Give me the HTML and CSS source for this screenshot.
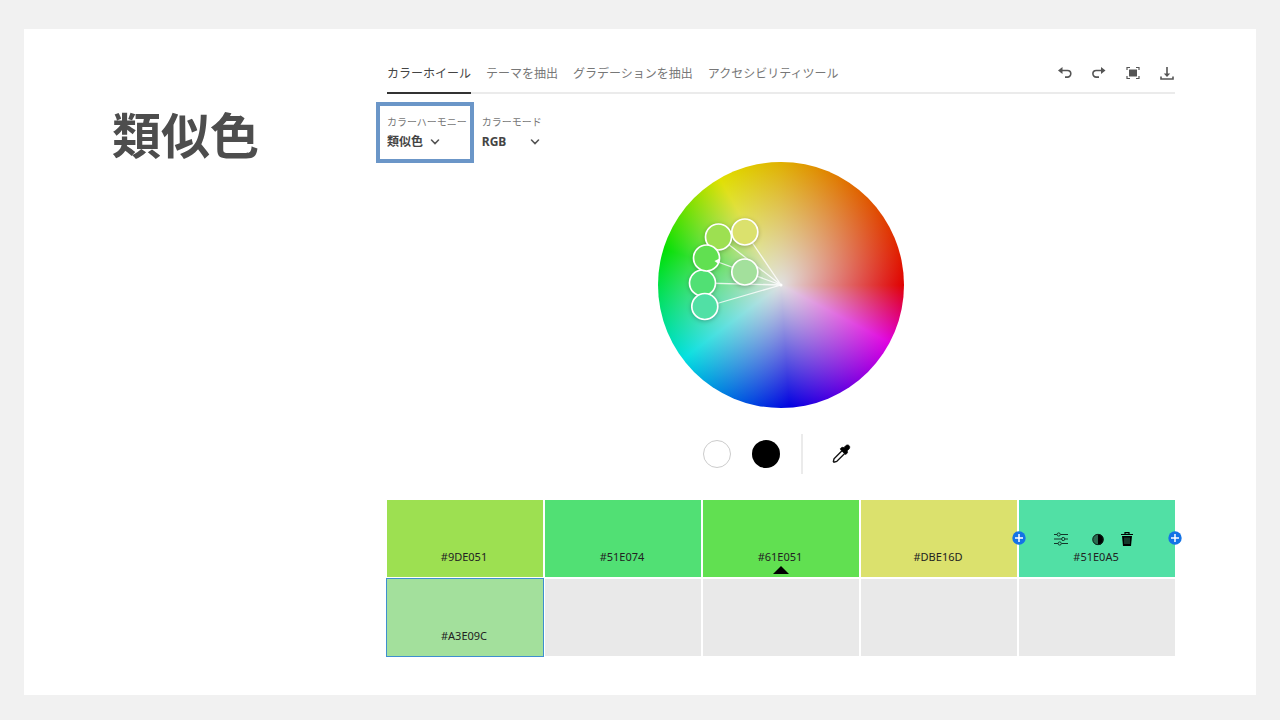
FILE: index.html
```html
<!DOCTYPE html>
<html lang="ja">
<head>
<meta charset="utf-8">
<title>類似色</title>
<meta name="viewport" content="width=device-width, initial-scale=1">
<link rel="stylesheet" href="styles.css">
</head>
<body>
<main class="slide">
  <h1 class="title">類似色</h1>
  <section class="tool">
    <header class="topbar">
      <nav class="tabs">
        <a class="tab tab-active" href="#wheel">カラーホイール</a>
        <a class="tab" href="#theme">テーマを抽出</a>
        <a class="tab" href="#gradient">グラデーションを抽出</a>
        <a class="tab" href="#a11y">アクセシビリティツール</a>
      </nav>
      <div class="actions">
        <button class="icon-btn" aria-label="元に戻す"><svg width="16" height="16" viewBox="0 0 16 16"><path d="M5 5.500h5.500a3.300 3.300 0 0 1 0 6.600H8" fill="none" stroke="#555" stroke-width="1.600"/><path d="M1 5.500 5.500 2v7z" fill="#555"/></svg></button>
        <button class="icon-btn" aria-label="やり直し"><svg width="16" height="16" viewBox="0 0 16 16"><path d="M10 5.500H5.200a3.300 3.300 0 0 0 0 6.600H8" fill="none" stroke="#555" stroke-width="1.600"/><path d="M14.500 5.500 10 2v7z" fill="#555"/></svg></button>
        <button class="icon-btn" aria-label="全画面"><svg width="16" height="16" viewBox="0 0 16 16"><path d="M4 4.500h8v7H4z" fill="#555"/><path d="M2 5V2.500h3M11 2.500h3V5M14 11v2.500h-3M5 13.500H2V11" fill="none" stroke="#555" stroke-width="1.200"/></svg></button>
        <button class="icon-btn" aria-label="ダウンロード"><svg width="16" height="16" viewBox="0 0 16 16"><path d="M8 2v8M2 11.500V14h12v-2.500" fill="none" stroke="#555" stroke-width="1.600"/><path d="M4.800 8.500h6.400L8 12z" fill="#555"/></svg></button>
      </div>
    </header>

    <div class="options">
      <div class="field field-marked">
        <label for="harmony">カラーハーモニー</label>
        <div class="picker"><select id="harmony" class="select-short"><option>類似色</option></select><svg class="chevron" width="10" height="8" viewBox="0 0 10 8"><path d="m1.500 2 3.500 3.500L8.500 2" fill="none" stroke="#555" stroke-width="1.600" stroke-linecap="round"/></svg></div>
      </div>
      <div class="field">
        <label for="mode">カラーモード</label>
        <div class="picker"><select id="mode" class="select-long"><option>RGB</option></select><svg class="chevron" width="10" height="8" viewBox="0 0 10 8"><path d="m1.500 2 3.500 3.500L8.500 2" fill="none" stroke="#555" stroke-width="1.600" stroke-linecap="round"/></svg></div>
      </div>
    </div>

    <div class="wheel">
      <svg class="markers" viewBox="0 0 246 246">
        <g stroke="#fff" stroke-width="1.300" opacity=".8">
          <path d="M123 123 87 70M123 123 61 75M123 123 49 96M123 123 87 110M123 123 45 121M123 123 47 145"/>
        </g>
        <circle cx="123" cy="123" r="1.500" fill="#fff"/>
        <g class="dots" stroke="#fff" stroke-width="1.700">
          <circle cx="60.500" cy="75" r="13" fill="#9de051"/>
          <circle cx="86.800" cy="70" r="13" fill="#dbe16d"/>
          <circle cx="86.800" cy="110" r="13" fill="#a3e09c"/>
          <circle cx="44.500" cy="121" r="13" fill="#51e074"/>
          <circle cx="48.500" cy="96" r="13" fill="#61e051"/>
          <circle cx="46.800" cy="144.500" r="13" fill="#51e0a5"/>
        </g>
        <path d="m56.500 99 5-2.500-1 5.500z" fill="#fff"/>
      </svg>
    </div>

    <div class="background-row">
      <button class="dot dot-white" aria-label="白の背景"></button>
      <button class="dot dot-black" aria-label="黒の背景"></button>
      <span class="divider"></span>
      <button class="dropper" aria-label="スポイト"><svg width="20" height="20" viewBox="0 0 20 20"><path d="m11 6.800-8 8-.6 2.700.6.600 2.700-.7 8-8" fill="#fff" stroke="#111" stroke-width="1.400"/><path d="m9.300 4.800 1.800-1.500 1.900.4c.9-1.400 2-2.500 3.300-2.700 1.500-.1 2.500 1 2.400 2.400-.1 1.300-1.300 2.400-2.600 3.300l.4 1.900-1.500 1.800-1.600-.9-3.200-3.200z" fill="#000" stroke="#000" stroke-width=".8"/></svg></button>
    </div>

    <div class="swatches">
      <div class="swatch c1"><span>#9DE051</span></div>
      <div class="swatch c2"><span>#51E074</span></div>
      <div class="swatch c3"><span>#61E051</span><i class="base-mark"></i></div>
      <div class="swatch c4"><span>#DBE16D</span></div>
      <div class="swatch c5">
        <button class="add add-left" aria-label="左に追加"><svg width="14" height="14" viewBox="0 0 14 14"><circle cx="7" cy="7" r="6.700" fill="#1473e6"/><path d="M7 3v8M3 7h8" stroke="#fff" stroke-width="1.500"/></svg></button>
        <div class="swatch-tools">
          <button class="icon-btn" aria-label="調整"><svg width="14" height="14" viewBox="0 0 14 14"><g fill="none" stroke="#14352a" stroke-width="1"><path d="M0 2.500h3M6.500 2.500H14M0 7h7.500M11 7h3M0 11.500h4M7.500 11.500H14"/><circle cx="4.700" cy="2.500" r="1.600"/><circle cx="9.200" cy="7" r="1.600"/><circle cx="5.700" cy="11.500" r="1.600"/></g></svg></button>
          <button class="icon-btn shade" aria-label="シェード"><svg width="14" height="14" viewBox="0 0 14 14"><circle cx="7" cy="7.500" r="5.500" fill="#2a6b50"/><path d="M7 2a5.500 5.500 0 0 1 0 11z" fill="#000"/><circle cx="7" cy="7.500" r="5.200" fill="none" stroke="#0c271c"/></svg></button>
          <button class="icon-btn" aria-label="削除"><svg width="14" height="14" viewBox="0 0 14 14"><path d="M1 2.500h12M5 2V.700h4V2" fill="none" stroke="#000" stroke-width="1.200"/><path d="M2 4h10l-1 10H3z" fill="#000"/><path d="M5 5.500v6.500M7 5.500v6.500M9 5.500v6.500" stroke="#348e69" stroke-width=".8"/></svg></button>
        </div>
        <span>#51E0A5</span>
        <button class="add add-right" aria-label="右に追加"><svg width="14" height="14" viewBox="0 0 14 14"><circle cx="7" cy="7" r="6.700" fill="#1473e6"/><path d="M7 3v8M3 7h8" stroke="#fff" stroke-width="1.500"/></svg></button>
      </div>
      <div class="swatch c6"><span>#A3E09C</span></div>
      <div class="swatch"></div>
      <div class="swatch"></div>
      <div class="swatch"></div>
      <div class="swatch"></div>
    </div>
  </section>
</main>
</body>
</html>
```
FILE: styles.css
```css
* { box-sizing: border-box; }

body {
  margin: 0;
  min-height: 100vh;
  padding: 29px 24px 25px;
  display: flex;
  background: #f1f1f1;
  color: #444;
  font-family: "Noto Sans", "Noto Sans CJK JP", sans-serif;
}

button {
  padding: 0;
  border: 0;
  background: none;
  cursor: pointer;
}

svg { display: block; }

.slide {
  flex: 1;
  display: grid;
  grid-template-columns: 274px minmax(0, 1fr);
  column-gap: 1px;
  padding: 25px 81px 38px 88px;
  background: #fff;
}

.title {
  margin: 43px 0 0;
  color: #4d4d4d;
  font-family: "Noto Sans CJK JP", sans-serif;
  font-size: 49px;
  line-height: 72px;
  font-weight: 700;
}

.tool {
  display: flex;
  flex-direction: column;
}

.topbar {
  display: flex;
  justify-content: space-between;
  height: 40px;
  border-bottom: 2px solid #ebebeb;
}

.tabs {
  display: flex;
  gap: 15px;
}

.tab {
  height: 40px;
  border-bottom: 2px solid transparent;
  color: #777;
  font-size: 12px;
  line-height: 40px;
  text-decoration: none;
  white-space: nowrap;
}

.tab-active {
  border-color: #333;
  color: #444;
}

.actions {
  display: flex;
  align-items: center;
  gap: 18px;
}

.options {
  display: flex;
  gap: 15px;
  padding-top: 20px;
}

.field {
  position: relative;
  display: flex;
  flex-direction: column;
}

.field label {
  color: #777;
  font-size: 10px;
  line-height: 16px;
}

/* Frame drawn round the harmony field */
.field-marked::after {
  content: "";
  position: absolute;
  inset: -12px -7px -9px -11px;
  border: 4px solid #6b96c8;
  pointer-events: none;
}

.picker {
  display: flex;
  align-items: center;
  height: 24px;
}

.picker select {
  appearance: none;
  padding: 0;
  border: 0;
  background: none;
  color: #444;
  font: 700 12px/24px "Noto Sans", "Noto Sans CJK JP", sans-serif;
}

.select-short { width: 43px; }
.select-long { width: 48px; }

.wheel {
  align-self: center;
  width: 246px;
  height: 246px;
  margin-top: 8px;
  border-radius: 50%;
  background:
    radial-gradient(circle closest-side, rgb(224 224 224) 0%, rgb(224 224 224 / 0) 100%),
    conic-gradient(#e0b000 0deg, #e00000 90deg, #e000e0 118deg, #0000e0 176deg, #00e0e0 233deg, #00e000 287deg, #e0e000 330deg, #e0b000 360deg);
}

.dots { filter: drop-shadow(0 1px 2px rgb(0 0 0 / 25%)); }

.background-row {
  align-self: center;
  display: flex;
  align-items: center;
  gap: 21px;
  height: 40px;
  margin-top: 26px;
  padding-right: 8px;
}

.dot {
  width: 28px;
  height: 28px;
  border-radius: 50%;
}

.dot-white { border: 1px solid #ccc; }
.dot-black { background: #000; }

.divider {
  width: 2px;
  height: 40px;
  background: #ebebeb;
}

.dropper { margin-left: 7px; }

.swatches {
  display: grid;
  grid-template-columns: repeat(5, 1fr);
  grid-auto-rows: 77px;
  gap: 2px;
  margin-top: 26px;
}

.swatch {
  position: relative;
  display: flex;
  flex-direction: column;
  align-items: center;
  justify-content: flex-end;
  padding: 0 2px 13px 0;
  background: #e9e9e9;
  color: #222;
  font-size: 11px;
  line-height: 14px;
}

.c1 { background: #9de051; }
.c2 { background: #51e074; }
.c3 { background: #61e051; }
.c4 { background: #dbe16d; }
.c5 { background: #51e0a5; }
.c6 { background: #a3e09c; outline: 1px solid #3e8fcf; z-index: 1; }

.base-mark {
  position: absolute;
  left: 50%;
  bottom: 3px;
  margin-left: -8px;
  border: 8px solid transparent;
  border-top: 0;
  border-bottom-color: #000;
}

.swatch-tools {
  display: flex;
  align-items: center;
  gap: 15px;
  padding: 0 4px 4px 0;
}

.shade { margin-left: 8px; }

.add {
  position: absolute;
  top: 31px;
}

.add-left { left: -7px; }
.add-right { right: -7px; }
```
